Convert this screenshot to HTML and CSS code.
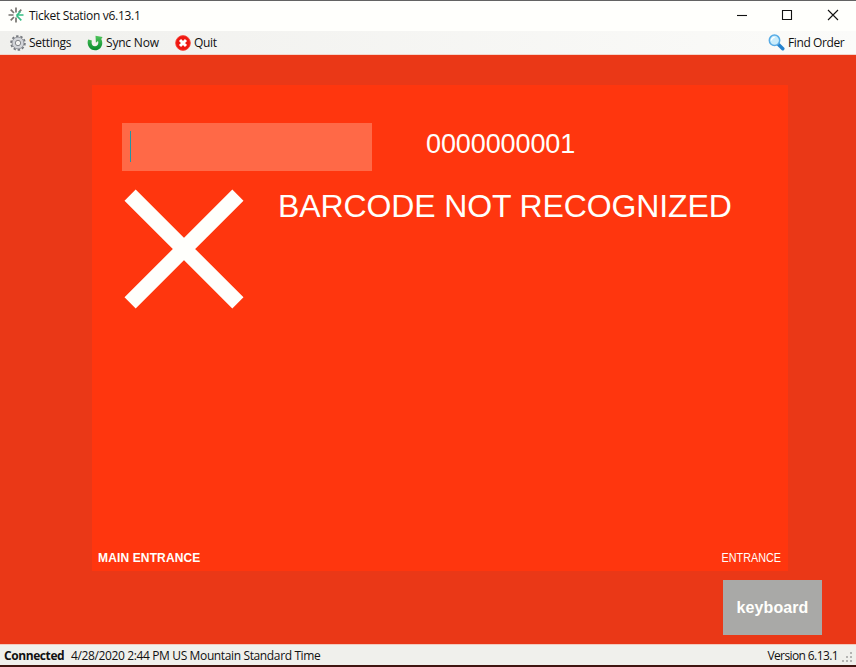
FILE: index.html
```html
<!DOCTYPE html>
<html lang="en">
<head>
<meta charset="utf-8">
<title>Ticket Station</title>
<link rel="stylesheet" href="styles.css">
</head>
<body>
<div class="window">
  <header class="titlebar">
    <svg class="app-icon" width="16" height="16" viewBox="0 0 16 16" fill="none" stroke="#77746f" stroke-width="1.700">
      <path d="M8 .5v5M2.700 2.700l3.300 3.300M.5 8h5M2.700 13.300l3.300-3.300M8 15.500v-5M13.300 2.700l-2.600 2.600"/>
      <path d="M15.500 8H8.500M13.300 13.300L8.500 8.500M8.500 8.500l4-4" stroke="#35bd83"/>
    </svg>
    <span class="title">Ticket Station v6.13.1</span>
    <svg class="controls" width="104" height="14" viewBox="0 0 104 14" fill="none" stroke="#111" stroke-width="1.100">
      <path d="M1 7.500h10"/><path d="M46.500 2.500h9v9h-9z"/><path d="M92 2l10 10M102 2L92 12"/>
    </svg>
  </header>
  <nav class="toolbar">
    <span class="tool settings">
      <svg width="16" height="16" viewBox="0 0 16 16" fill="none">
        <circle cx="8" cy="8" r="6.900" stroke="#74777d" stroke-width="1.800" stroke-dasharray="2.400 1.935"/>
        <circle cx="8" cy="8" r="4.500" stroke="#d3d5d9" stroke-width="3"/>
        <circle cx="8" cy="8" r="5.900" stroke="#85888e" stroke-width=".8"/>
        <circle cx="8" cy="8" r="2.700" fill="#f2f2f0" stroke="#777a80" stroke-width=".9"/>
      </svg>
      <span class="label">Settings</span>
    </span>
    <span class="tool sync">
      <svg width="16" height="16" viewBox="0 0 16 16" fill="none">
        <defs><linearGradient id="g" x2="0" y2="1"><stop stop-color="#4fc45b"/><stop offset="1" stop-color="#078a2c"/></linearGradient></defs>
        <path d="M1.200 4.500C-.8 9.800 2.800 15.300 8 15.300c5.700 0 9-6 6.300-11.200L15.600 2 8.500.8l.4 7L11 6c1 3-.6 5.200-3 5.200-2.900 0-4-2.600-3.100-5.700z" fill="url(#g)"/>
      </svg>
      <span class="label">Sync Now</span>
    </span>
    <span class="tool quit">
      <svg width="16" height="16" viewBox="0 0 16 16">
        <circle cx="8" cy="8" r="7.400" fill="#ee1711" stroke="#fa493c" stroke-width=".8"/>
        <path d="M5 5l6 6M11 5l-6 6" stroke="#fff" stroke-width="3"/>
      </svg>
      <span class="label">Quit</span>
    </span>
    <span class="tool find">
      <svg width="17" height="17" viewBox="0 0 17 17">
        <path d="M10.500 10.500l4.300 4.300" stroke="#2582ce" stroke-width="3.400" stroke-linecap="round"/>
        <circle cx="6.500" cy="6.300" r="5.200" fill="#c9ecfb" stroke="#58ace6" stroke-width="1.500"/>
        <path d="M3.500 6.500a3.200 3.200 0 0 1 3.200-3.200" fill="none" stroke="#fff" stroke-width="1.300"/>
      </svg>
      <span class="label">Find Order</span>
    </span>
  </nav>
  <main class="stage">
    <section class="panel">
      <div class="scan-row">
        <div class="scan-input"><span class="caret"></span></div>
        <span class="code">0000000001</span>
      </div>
      <div class="result">
        <svg width="120" height="120" viewBox="0 0 120 120" stroke="#fffffc" stroke-width="15.800"><path d="M6.100 6.100l107.800 107.800M113.900 6.100L6.100 113.900"/></svg>
        <span class="message">BARCODE NOT RECOGNIZED</span>
      </div>
      <footer class="gate"><b class="gate-name">MAIN ENTRANCE</b><span class="gate-type">ENTRANCE</span></footer>
    </section>
    <div class="keyboard">keyboard</div>
  </main>
  <footer class="statusbar">
    <b class="connected">Connected</b>
    <span class="date">4/28/2020 2:44 PM US Mountain Standard Time</span>
    <span class="version">Version 6.13.1</span>
    <svg class="grip" width="12" height="12" viewBox="0 0 12 12" fill="#b4b4b2"><path d="M8 0h2v2H8zM4 4h2v2H4zM8 4h2v2H8zM0 8h2v2H0zM4 8h2v2H4zM8 8h2v2H8z"/></svg>
  </footer>
</div>
</body>
</html>
```
FILE: styles.css
```css
* { box-sizing: border-box; }
body { margin: 0; font-family: "Open Sans", "Noto Sans", sans-serif; font-size: 12px; color: #111; overflow: hidden; }
svg { display: block; flex: none; }
span, b { white-space: nowrap; }
.window { width: 856px; height: 667px; display: flex; flex-direction: column; background: #ea3817; }
.titlebar { height: 31px; border-top: 1px solid #636363; background: #fffffc; display: flex; align-items: center; padding: 0 16px 2px 8px; }
.title { margin-left: 5px; letter-spacing: -.3px; }
.controls { margin-left: auto; }
.toolbar { height: 24px; border-bottom: 1px solid #f3d5cc; background: linear-gradient(90deg, #f0f0ed, #fbfbf9); display: flex; align-items: center; padding: 0 12px 0 10px; }
.tool { display: flex; align-items: center; gap: 3px; letter-spacing: -.3px; }
.settings { width: 77px; }
.sync { width: 88px; letter-spacing: -.2px; }
.find { margin-left: auto; width: 76px; letter-spacing: -.4px; }
.stage { height: 589px; padding: 30px 34px 0 92px; }
.panel { width: 696px; height: 486px; background: #ff360e; padding: 38px 7px 0 30px; display: flex; flex-direction: column; color: #fffffc; font-family: "Liberation Sans", sans-serif; }
.scan-row { display: flex; height: 48px; }
.scan-input { width: 250px; background: #ff6947; padding: 8px; }
.caret { display: block; width: 1px; height: 31px; background: #2295a5; }
.code { font-size: 27px; line-height: 43px; margin-left: 54px; letter-spacing: -.1px; }
.result { display: flex; margin-top: 18px; margin-left: 2px; }
.message { font-size: 32px; line-height: 34px; margin-left: 34px; letter-spacing: -.12px; }
.gate { display: flex; justify-content: space-between; margin: auto 0 5px -24px; font-size: 12px; line-height: 16px; }
.gate-name { letter-spacing: .14px; }
.gate-type { transform: scaleX(.9); transform-origin: right; }
.keyboard { width: 99px; height: 55px; margin: 9px 0 0 auto; background: #a9a9a7; color: #fffffc; font: bold 16px/55px "Liberation Sans", sans-serif; letter-spacing: .1px; text-align: center; }
.statusbar { height: 23px; background: #f0f0ec; border-top: 1px solid #f3c9bd; border-bottom: 2px solid #401410; display: flex; align-items: center; padding: 0 2px 0 4px; }
.connected { width: 67px; letter-spacing: -.42px; }
.date { letter-spacing: -.37px; }
.version { margin-left: auto; letter-spacing: -.6px; }
.grip { margin: 6px 0 0 4px; }
```
